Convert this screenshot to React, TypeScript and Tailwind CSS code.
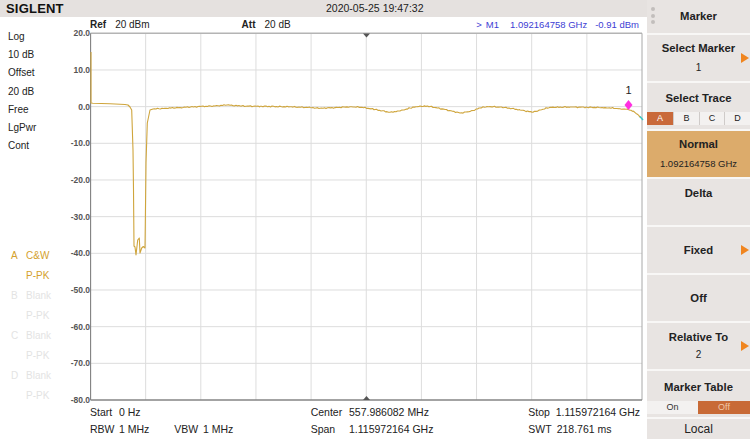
import React from "react";

const X0 = 90.5;
const X1 = 642;
const Y0 = 33.3;
const Y1 = 400;
const vx = Array.from({ length: 11 }, (_, i) => X0 + (i * (X1 - X0)) / 10);
const hy = Array.from({ length: 11 }, (_, j) => Y0 + (j * (Y1 - Y0)) / 10);

const raw: [number, number][] = [
  [91, 52], [91, 103], [93, 103.3], [110, 103.8], [125, 104.5], [128, 105], [130, 107],
  [131.7, 110], [133, 150], [133.5, 190], [134, 246], [135, 247], [136, 255], [137.7, 240],
  [139.3, 238], [140, 253], [141.7, 248], [143.3, 246.5], [145, 248], [145.3, 224], [146, 163],
  [147.3, 123], [150, 110], [153, 109], [165, 108.3], [180, 107.5], [200, 106.5], [215, 106],
  [227, 105], [240, 106], [260, 106.3], [290, 106.8], [310, 107.5], [320, 108.3], [335, 107.6],
  [350, 106.7], [362, 107.3], [375, 109.5], [390, 112.3], [400, 111], [410, 108], [420, 106],
  [430, 106.5], [445, 109.5], [460, 113], [470, 111.5], [480, 108], [487, 106.5], [500, 107],
  [512, 108.5], [520, 110], [533, 112.3], [540, 110], [550, 107.3], [570, 107], [587, 107.3],
  [605, 107.6], [620, 108.7], [628, 109.5], [633, 111], [637, 114], [641, 117.5],
];

function buildTrace(): string {
  const out: string[] = [];
  for (let i = 0; i < raw.length; i++) {
    const [x, y] = raw[i];
    if (i > 0) {
      const [px, py] = raw[i - 1];
      if (x - px > 3 && y < 120 && py < 120 && x > 150) {
        for (let xx = px + 1.5; xx < x; xx += 1.5) {
          const t = (xx - px) / (x - px);
          const yy = py + (y - py) * t + 0.35 * Math.sin(xx * 1.7) + 0.25 * Math.sin(xx * 3.3);
          out.push(`L${xx.toFixed(1)},${yy.toFixed(2)}`);
        }
      }
    }
    out.push(`${i ? "L" : "M"}${x},${y}`);
  }
  return out.join(" ");
}

const tracePath = buildTrace();

const yLabels = ["20.0", "10.0", "0.0", "-10.0", "-20.0", "-30.0", "-40.0", "-50.0", "-60.0", "-70.0", "-80.0"];

function Arrow() {
  return (
    <svg className="absolute right-[1px] top-1/2 -translate-y-1/2" width="8" height="10" viewBox="0 0 8 10">
      <polygon points="0,0 8,5 0,10" fill="#f0851f" />
    </svg>
  );
}

export default function App() {
  return (
    <div className="flex h-[439px] w-[750px] overflow-hidden bg-white font-['Liberation_Sans',Arial,sans-serif] text-[#222]">
      {/* Main area */}
      <div className="flex w-[647px] flex-col">
        {/* Header */}
        <div className="flex h-[17px] items-center bg-[#e5e1df]">
          <div className="w-[70px] pl-[6px] text-[13px] font-bold leading-none tracking-[0.2px] text-[#111]">SIGLENT</div>
          <div className="ml-[256px] text-[10.5px] leading-none text-[#222]">2020-05-25 19:47:32</div>
        </div>
        <div className="flex flex-1">
          {/* Left settings column */}
          <div className="flex w-[70px] flex-col pl-[8px] pt-[11px] text-[10px] leading-[18.2px] text-[#222]">
            <div>Log</div>
            <div>10 dB</div>
            <div>Offset</div>
            <div>20 dB</div>
            <div>Free</div>
            <div>LgPwr</div>
            <div>Cont</div>
            <div className="mt-[91px] flex flex-col pl-[3px] text-[10px] leading-[20px]">
              <div className="flex text-[#d4a12c]">
                <span className="w-[15px]">A</span>
                <span>C&amp;W</span>
              </div>
              <div className="flex text-[#d4a12c]">
                <span className="w-[15px]"></span>
                <span>P-PK</span>
              </div>
              <div className="flex text-[#e3e3e3]">
                <span className="w-[15px]">B</span>
                <span>Blank</span>
              </div>
              <div className="flex text-[#e3e3e3]">
                <span className="w-[15px]"></span>
                <span>P-PK</span>
              </div>
              <div className="flex text-[#e3e3e3]">
                <span className="w-[15px]">C</span>
                <span>Blank</span>
              </div>
              <div className="flex text-[#e3e3e3]">
                <span className="w-[15px]"></span>
                <span>P-PK</span>
              </div>
              <div className="flex text-[#e3e3e3]">
                <span className="w-[15px]">D</span>
                <span>Blank</span>
              </div>
              <div className="flex text-[#e3e3e3]">
                <span className="w-[15px]"></span>
                <span>P-PK</span>
              </div>
            </div>
          </div>

          {/* Graph region */}
          <div className="flex w-[577px] flex-col">
            <div className="flex h-[15px] items-center pl-[20px] pr-[8px] text-[10px] leading-none">
              <span className="font-bold">Ref</span>
              <span className="ml-[9px]">20 dBm</span>
              <span className="ml-[92px] font-bold">Att</span>
              <span className="ml-[9px]">20 dB</span>
              <span className="ml-auto flex text-[9.5px] text-[#3d3dd4]">
                <span>&gt;</span>
                <span className="ml-[4px]">M1</span>
                <span className="ml-[11px]">1.092164758 GHz</span>
                <span className="ml-[8px]">-0.91 dBm</span>
              </span>
            </div>
            <div className="flex h-[369px]">
              <div className="-mt-[2.7px] flex h-[374.7px] w-[20px] flex-col items-end justify-between text-[8.5px] font-bold leading-[8px] text-[#555]">
                {yLabels.map((l) => (
                  <div key={l}>{l}</div>
                ))}
              </div>
              <svg width="557" height="369" viewBox="90 32 557 369" className="block">
                {vx.slice(1, 10).map((x) => (
                  <line key={"v" + x} x1={x} y1={Y0} x2={x} y2={Y1} stroke="#dddddd" strokeWidth="1" />
                ))}
                {hy.slice(1, 10).map((y) => (
                  <line key={"h" + y} x1={X0} y1={y} x2={X1} y2={y} stroke="#dddddd" strokeWidth="1" />
                ))}
                <line x1={X0} y1={Y0} x2={X1} y2={Y0} stroke="#b4b4b4" strokeWidth="1.6" />
                <line x1={X1} y1={Y0} x2={X1} y2={Y1} stroke="#a8a8a8" strokeWidth="1" />
                <line x1={X0} y1={Y0} x2={X0} y2={Y1} stroke="#858585" strokeWidth="1.3" />
                <line x1={X0} y1={Y1} x2={X1} y2={Y1} stroke="#858585" strokeWidth="1.3" />
                <polygon points="363,33.5 370,33.5 366.5,37.5" fill="#555" />
                <polygon points="363,400 370,400 366.5,396" fill="#555" />
                <path d={tracePath} fill="none" stroke="#cfa53c" strokeWidth="1.1" strokeLinejoin="round" />
                <line x1="640" y1="116.5" x2="643" y2="120" stroke="#36c6c6" strokeWidth="1.4" />
                <polygon points="628.5,100 632.5,105 628.5,110 624.5,105" fill="#ff2fe0" />
                <text x="628.5" y="94" textAnchor="middle" fontSize="11" fill="#222" fontFamily="Liberation Sans, Arial, sans-serif">1</text>
              </svg>
            </div>
            <div className="flex flex-col pl-[20px] pt-[3px] text-[10.5px] leading-[17px]">
              <div className="flex whitespace-nowrap">
                <span className="w-[29px]">Start</span>
                <span className="w-[191.7px]">0 Hz</span>
                <span className="w-[38.3px]">Center</span>
                <span className="w-[179.3px]">557.986082 MHz</span>
                <span className="w-[27.4px]">Stop</span>
                <span>1.115972164 GHz</span>
              </div>
              <div className="flex whitespace-nowrap">
                <span className="w-[29px]">RBW</span>
                <span className="w-[55.3px]">1 MHz</span>
                <span className="w-[28.7px]">VBW</span>
                <span className="w-[107.7px]">1 MHz</span>
                <span className="w-[38.3px]">Span</span>
                <span className="w-[179.3px]">1.115972164 GHz</span>
                <span className="w-[28.4px]">SWT</span>
                <span>218.761 ms</span>
              </div>
            </div>
          </div>
        </div>
      </div>

      {/* Right menu */}
      <div className="flex w-[103px] flex-col gap-[2px] bg-[#f8f7f6] text-[11.3px] text-[#222]">
        <div className="relative flex h-[33px] items-center justify-center bg-[#e8e4e2] font-bold">
          <div className="absolute left-[4px] top-[7px] flex flex-col gap-[2.5px]">
            <span className="h-[4px] w-[4px] rounded-full bg-[#c2bebc]"></span>
            <span className="h-[4px] w-[4px] rounded-full bg-[#c2bebc]"></span>
            <span className="h-[4px] w-[4px] rounded-full bg-[#c2bebc]"></span>
          </div>
          Marker
        </div>
        <div className="relative flex h-[46px] flex-col items-center justify-center bg-[#e8e4e2] leading-[20px]">
          <div className="font-bold">Select Marker</div>
          <div className="text-[10px]">1</div>
          <Arrow />
        </div>
        <div className="flex h-[46px] flex-col bg-[#e8e4e2]">
          <div className="pt-[6px] text-center font-bold leading-[18px]">Select Trace</div>
          <div className="mt-[5px] flex h-[13px] text-[9px] leading-[13px]">
            <div className="w-[26px] bg-[#c9693a] text-center text-white">A</div>
            <div className="w-[26px] border-l border-[#cfcbc9] bg-[#f3f1f0] text-center">B</div>
            <div className="w-[25px] border-l border-[#cfcbc9] bg-[#f3f1f0] text-center">C</div>
            <div className="w-[26px] border-l border-[#cfcbc9] bg-[#f3f1f0] text-center">D</div>
          </div>
        </div>
        <div className="flex h-[46px] flex-col items-center justify-center bg-[#dcab6b] leading-[20px]">
          <div className="font-bold">Normal</div>
          <div className="text-[9.5px]">1.092164758 GHz</div>
        </div>
        <div className="flex h-[46px] flex-col items-center bg-[#e8e4e2] pt-[5px] leading-[18px]">
          <div className="font-bold">Delta</div>
        </div>
        <div className="relative flex h-[46px] items-center justify-center bg-[#e8e4e2] font-bold">
          Fixed
          <Arrow />
        </div>
        <div className="flex h-[46px] items-center justify-center bg-[#e8e4e2] font-bold">Off</div>
        <div className="relative flex h-[46px] flex-col items-center justify-center bg-[#e8e4e2] leading-[17px]">
          <div className="font-bold">Relative To</div>
          <div className="text-[10px]">2</div>
          <Arrow />
        </div>
        <div className="flex h-[46px] flex-col bg-[#e8e4e2]">
          <div className="pt-[7px] text-center font-bold leading-[18px]">Marker Table</div>
          <div className="mt-[5px] flex h-[13px] text-[9px] leading-[13px]">
            <div className="w-[51px] bg-[#f3f1f0] text-center text-[#333]">On</div>
            <div className="w-[52px] bg-[#c86a36] text-center text-[#f2c8a8]">Off</div>
          </div>
        </div>
        <div className="flex h-[20px] items-center justify-center bg-[#e8e4e2] text-[12px]">Local</div>
      </div>
    </div>
  );
}
